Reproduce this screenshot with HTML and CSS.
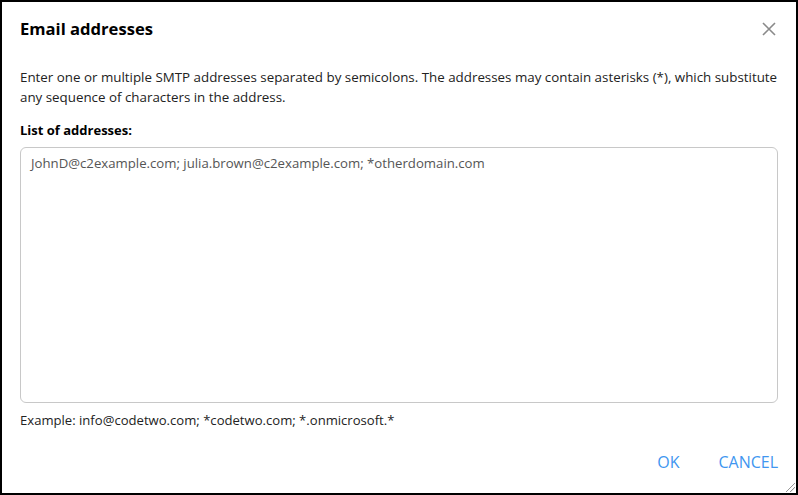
FILE: index.html
```html
<!DOCTYPE html>
<html lang="en">
  <head>
    <meta charset="UTF-8" />
    <meta name="viewport" content="width=device-width, initial-scale=1.0" />
    <title>Email addresses</title>
    <link rel="stylesheet" href="styles.css">
  </head>
  <body>
    <div id="dialog">
      <div class="dialog-header">
        <h1 class="dialog-title">Email addresses</h1>
        <button class="close-btn" aria-label="Close">
          <svg width="14" height="14" viewBox="0 0 14 14">
            <path d="M1 1 L13 13 M13 1 L1 13" stroke="#8a8a8a" stroke-width="1.6" fill="none" />
          </svg>
        </button>
      </div>
      <p class="intro">
        Enter one or multiple SMTP addresses separated by semicolons. The addresses may contain asterisks (*), which substitute<br>
        any sequence of characters in the address.
      </p>
      <label for="addresses" class="field-label">List of addresses:</label>
      <textarea id="addresses">JohnD@c2example.com; julia.brown@c2example.com; *otherdomain.com</textarea>
      <p class="hint">Example: info@codetwo.com; *codetwo.com; *.onmicrosoft.*</p>
      <div class="actions">
        <button class="text-btn">OK</button>
        <button class="text-btn">CANCEL</button>
      </div>
      <span class="grip"></span>
    </div>
  </body>
</html>
```

FILE: styles.css
```css
html,
body {
  margin: 0;
  height: 100%;
}
body {
  font-family: "Open Sans", "Noto Sans", sans-serif;
  font-size: 13px;
  color: #222;
  background-color: #fff;
}
#dialog {
  position: relative;
  box-sizing: border-box;
  height: 100%;
  border: 2px solid #000;
  padding: 0 18px;
  display: flex;
  flex-direction: column;
}
.dialog-header {
  display: flex;
  align-items: center;
  justify-content: space-between;
  padding-top: 15px;
  height: 24px;
}
.dialog-title {
  margin: 0;
  font-size: 16.6px;
  font-weight: 700;
  line-height: 24px;
  color: #000;
}
.close-btn {
  background: none;
  border: none;
  padding: 0;
  margin-right: 2px;
  cursor: pointer;
  display: flex;
}
.intro {
  margin: 26px 0 0;
  font-size: 13.35px;
  line-height: 20px;
  white-space: nowrap;
}
.field-label {
  display: block;
  margin-top: 13px;
  font-weight: 700;
  line-height: 20px;
  color: #000;
}
textarea {
  margin-top: 7px;
  height: 256px;
  box-sizing: border-box;
  border: 1px solid #c8c8c8;
  border-radius: 6px;
  padding: 5px 10px;
  font-family: inherit;
  font-size: 13.2px;
  line-height: 20px;
  color: #555;
  resize: none;
  outline: none;
}
.hint {
  margin: 7px 0 0;
  font-size: 13.1px;
  line-height: 20px;
}
.actions {
  display: flex;
  justify-content: flex-end;
  gap: 39px;
  margin-top: 22px;
}
.text-btn {
  background: none;
  border: none;
  padding: 0;
  font-family: inherit;
  font-size: 16px;
  line-height: 20px;
  color: #4096f0;
  cursor: pointer;
}
.grip {
  position: absolute;
  right: 1px;
  bottom: 1px;
  width: 9px;
  height: 9px;
  background: linear-gradient(135deg, transparent 45%, #999 46%, #999 52%, transparent 53%, transparent 70%, #999 71%, #999 77%, transparent 78%);
}
```
